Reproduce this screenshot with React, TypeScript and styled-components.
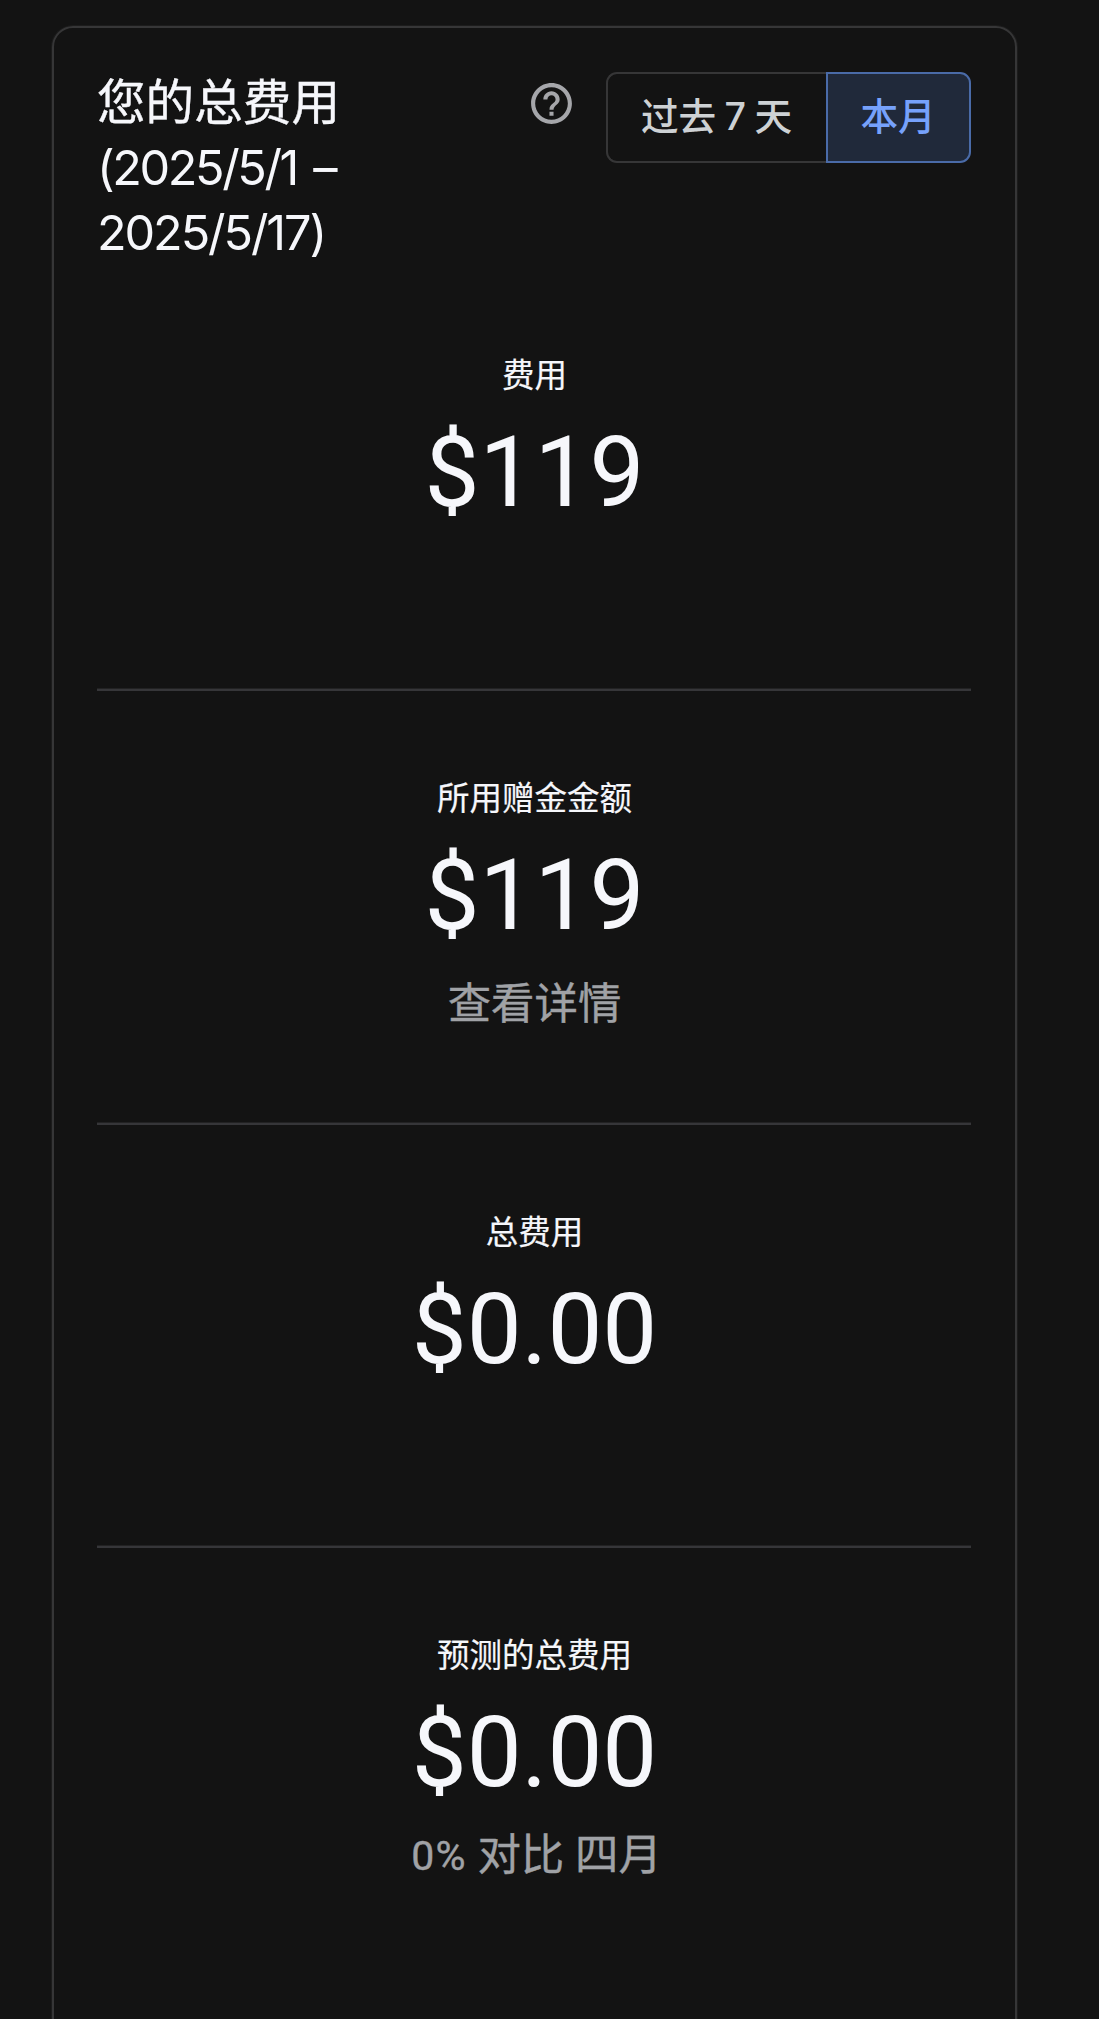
import React from "react";
import styled, { createGlobalStyle } from "styled-components";

const Global = createGlobalStyle`
  * { box-sizing: border-box; }
  body { margin: 0; background: #131313; }
`;

const Page = styled.main`
  height: 2019px;
  padding: 26px 82px 0 52px;
  overflow: hidden;
  background: #131313;
  color: #f6f7fb;
  font-family: Roboto, "Noto Sans CJK SC", sans-serif;
`;

const Card = styled.section`
  height: 2100px;
  border: 2px solid #363637;
  border-radius: 21px;
  padding: 0 44px 0 43px;
  box-shadow: 0 0 0 1px #1c1c1c;
`;

const Header = styled.header`
  display: flex;
  align-items: flex-start;
  height: 271px;
  padding-top: 44px;
`;

const Title = styled.h1`
  flex: 1;
  margin: -2px 0 0;
  font-family: Inter, "Noto Sans CJK SC", sans-serif;
  font-size: 48.6px;
  font-weight: 400;
  line-height: 65.2px;
`;

const Heading = styled.span`
  display: block;
  white-space: nowrap;
  -webkit-text-stroke: 0.4px currentColor;
`;

const DateLine = styled.span<{ $spacing: number }>`
  display: block;
  white-space: nowrap;
  letter-spacing: ${(p) => p.$spacing}px;
  word-spacing: 5px;
`;

const HelpIcon = styled.svg`
  width: 49px;
  height: 49px;
  margin: 7px 30px 0 0;
  fill: #a5a6aa;
`;

const Toggle = styled.div`
  display: flex;
  height: 91px;
`;

const ToggleButton = styled.button<{ $active?: boolean }>`
  width: ${(p) => (p.$active ? 145 : 220)}px;
  padding: 0 1px 2px 0;
  border: 2px solid ${(p) => (p.$active ? "#4a6ba8" : "#363637")};
  border-right-width: ${(p) => (p.$active ? 2 : 0)}px;
  border-radius: ${(p) => (p.$active ? "0 11px 11px 0" : "11px 0 0 11px")};
  background: ${(p) => (p.$active ? "#20293a" : "transparent")};
  color: ${(p) => (p.$active ? "#76a1fb" : "#cdd1d4")};
  font-family: Inter, "Noto Sans CJK SC", sans-serif;
  font-size: 37.6px;
  font-weight: 500;
  line-height: 54px;
  word-spacing: -1.6px;
  white-space: nowrap;
`;

const Metric = styled.section<{ $height: number; $top: number }>`
  display: flex;
  flex-direction: column;
  align-items: center;
  height: ${(p) => p.$height}px;
  padding: ${(p) => p.$top}px 0 0 1px;
  border-bottom: 2px solid #363639;
  box-shadow: inset 0 -1px 0 #222223;
  &:last-child {
    border-bottom: 0;
    box-shadow: none;
  }
`;

const Label = styled.div`
  font-size: 32.5px;
  line-height: 44px;
  -webkit-text-stroke: 0.2px currentColor;
`;

const Amount = styled.div`
  margin-top: 21px;
  font-size: 97.8px;
  line-height: 108px;
`;

const Note = styled.div<{ $gap: number }>`
  margin-top: ${(p) => p.$gap}px;
  color: #a0a2a6;
  font-size: 43.4px;
  line-height: 60px;
  -webkit-text-stroke: 0.4px currentColor;
`;

const Percent = styled.span`
  margin-left: 4px;
  font-size: 41px;
  letter-spacing: 1.2px;
`;

const metrics = [
  { label: "费用", amount: "$119", height: 392, top: 55 },
  { label: "所用赠金金额", amount: "$119", note: "查看详情", height: 434, top: 86, gap: 25 },
  { label: "总费用", amount: "$0.00", height: 423, top: 86 },
  {
    label: "预测的总费用",
    amount: "$0.00",
    percent: "0%",
    note: " 对比 四月",
    height: 450,
    top: 86,
    gap: 19,
  },
];

export default function App() {
  return (
    <Page>
      <Global />
      <Card>
        <Header>
          <Title>
            <Heading>您的总费用</Heading>
            <DateLine $spacing={-2.4}>(2025/5/1 –</DateLine>
            <DateLine $spacing={-2.1}>2025/5/17)</DateLine>
          </Title>
          <HelpIcon viewBox="0 0 24 24" aria-label="帮助">
            <path d="M11 18h2v-2h-2v2zm1-16C6.48 2 2 6.48 2 12s4.48 10 10 10 10-4.48 10-10S17.52 2 12 2zm0 18c-4.41 0-8-3.59-8-8s3.59-8 8-8 8 3.59 8 8-3.59 8-8 8zm0-14c-2.21 0-4 1.79-4 4h2c0-1.1.9-2 2-2s2 .9 2 2c0 2-3 1.75-3 5h2c0-2.25 3-2.5 3-5 0-2.21-1.79-4-4-4z" />
          </HelpIcon>
          <Toggle>
            <ToggleButton>过去 7 天</ToggleButton>
            <ToggleButton $active>本月</ToggleButton>
          </Toggle>
        </Header>
        {metrics.map((m) => (
          <Metric key={m.label} $height={m.height} $top={m.top}>
            <Label>{m.label}</Label>
            <Amount>{m.amount}</Amount>
            {m.note && (
              <Note $gap={m.gap ?? 25}>
                {m.percent && <Percent>{m.percent}</Percent>}
                {m.note}
              </Note>
            )}
          </Metric>
        ))}
      </Card>
    </Page>
  );
}
